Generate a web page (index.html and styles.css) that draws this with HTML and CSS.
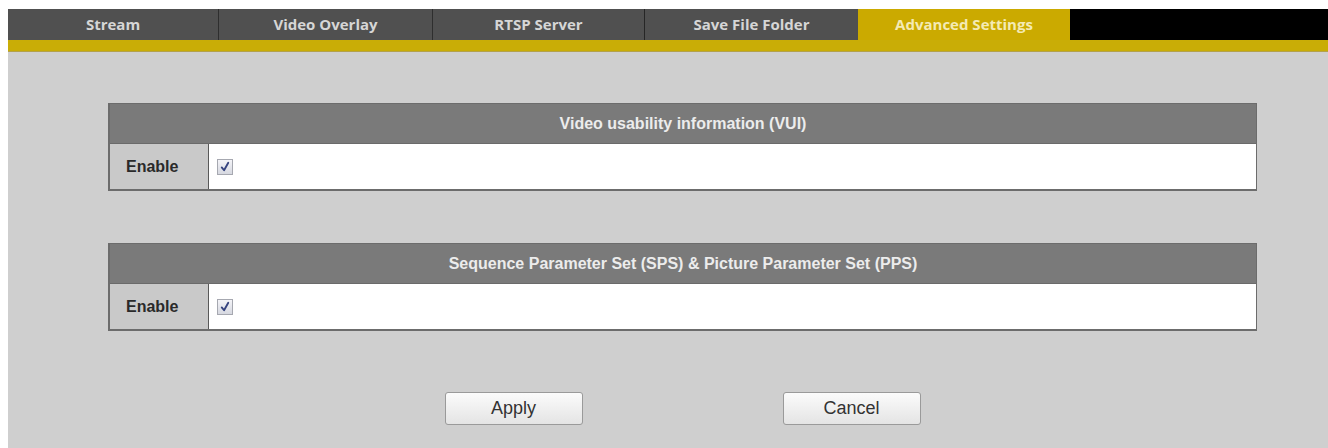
FILE: index.html
```html
<!DOCTYPE html>
<html>
<head>
<meta charset="utf-8">
<link rel="stylesheet" href="styles.css">
</head>
<body>
<div class="page">
  <nav class="tabs">
    <div class="tab">Stream</div>
    <div class="tab">Video Overlay</div>
    <div class="tab">RTSP Server</div>
    <div class="tab">Save File Folder</div>
    <div class="tab active">Advanced Settings</div>
    <div class="tab-fill"></div>
  </nav>
  <div class="accent"></div>
  <main class="content">
    <section class="panel">
      <div class="panel-head">Video usability information (VUI)</div>
      <div class="panel-row">
        <div class="label">Enable</div>
        <div class="value">
          <span class="check"><svg viewBox="0 0 15 15" width="14" height="14"><path d="M4 8 L6.5 11 L11 3" fill="none" stroke="#35437f" stroke-width="2" stroke-linecap="round" stroke-linejoin="round"/></svg></span>
        </div>
      </div>
    </section>
    <section class="panel">
      <div class="panel-head">Sequence Parameter Set (SPS) &amp; Picture Parameter Set (PPS)</div>
      <div class="panel-row">
        <div class="label">Enable</div>
        <div class="value">
          <span class="check"><svg viewBox="0 0 15 15" width="14" height="14"><path d="M4 8 L6.5 11 L11 3" fill="none" stroke="#35437f" stroke-width="2" stroke-linecap="round" stroke-linejoin="round"/></svg></span>
        </div>
      </div>
    </section>
    <div class="actions">
      <button class="btn">Apply</button>
      <button class="btn">Cancel</button>
    </div>
  </main>
</div>
</body>
</html>
```

FILE: styles.css
```css
html, body {
  margin: 0;
  padding: 0;
  background: #ffffff;
  height: 100%;
}
.page {
  padding: 9px 0 0 8px;
  height: 100%;
  box-sizing: border-box;
  display: flex;
  flex-direction: column;
}
.tabs {
  display: flex;
  height: 31px;
  background: #505050;
}
.tab {
  width: 212px;
  flex: none;
  display: flex;
  align-items: center;
  justify-content: center;
  font-family: "Open Sans", "DejaVu Sans", sans-serif;
  font-weight: 700;
  font-size: 15px;
  color: #d6d6d6;
  border-right: 1px solid #2e2e2e;
  box-sizing: border-box;
  padding-bottom: 2px;
}
.tab:nth-child(1) { width: 211px; }
.tab:nth-child(2) { width: 214px; }
.tab:nth-child(3) { width: 212px; border-right-color: #262626; }
.tab:nth-child(4) { width: 213px; border-right: none; }
.tab.active {
  background: #cbaa00;
  color: #f4eab4;
  border-right: none;
}
.tab-fill {
  flex: 1;
  background: #000000;
}
.accent {
  height: 12px;
  background: #c9ad06;
  border-bottom: 1px solid #b4a24a;
  box-sizing: border-box;
}
.content {
  flex: 1;
  background: #cfcfcf;
  padding: 51px 71px 0 100px;
  display: flex;
  flex-direction: column;
  gap: 52px;
}
.panel {
  border: 1px solid #6c6c6c;
  border-width: 1px 1px 2px 2px;
  background: #ffffff;
}
.panel-head {
  height: 39px;
  background: #7a7a7a;
  color: #ececec;
  font-family: "Liberation Sans", Arial, sans-serif;
  font-weight: 700;
  font-size: 16px;
  display: flex;
  align-items: center;
  justify-content: center;
  border-bottom: 1px solid #6a6a6a;
}
.panel-row {
  display: flex;
  height: 45px;
}
.label {
  width: 99px;
  flex: none;
  background: #c9c9c9;
  border-right: 1px solid #595959;
  display: flex;
  align-items: center;
  padding-left: 16px;
  box-sizing: border-box;
  font-family: "Liberation Sans", Arial, sans-serif;
  font-weight: 700;
  font-size: 16px;
  color: #2a2a2a;
}
.value {
  flex: 1;
  display: flex;
  align-items: center;
  padding-left: 8px;
  background: #ffffff;
}
.check {
  width: 16px;
  height: 16px;
  box-sizing: border-box;
  border: 1px solid #a6a8b0;
  background: linear-gradient(#f4f4f8, #d6d8e0);
  display: flex;
  align-items: center;
  justify-content: center;
}
.actions {
  display: flex;
  gap: 200px;
  justify-content: center;
  padding-top: 9px;
}
.btn {
  width: 138px;
  height: 33px;
  border: 1px solid #9a9a9a;
  border-radius: 3px;
  background: linear-gradient(#fbfbfb, #e4e4e4);
  font-family: "Liberation Sans", Arial, sans-serif;
  font-size: 18px;
  color: #333333;
  padding: 0;
}
```
